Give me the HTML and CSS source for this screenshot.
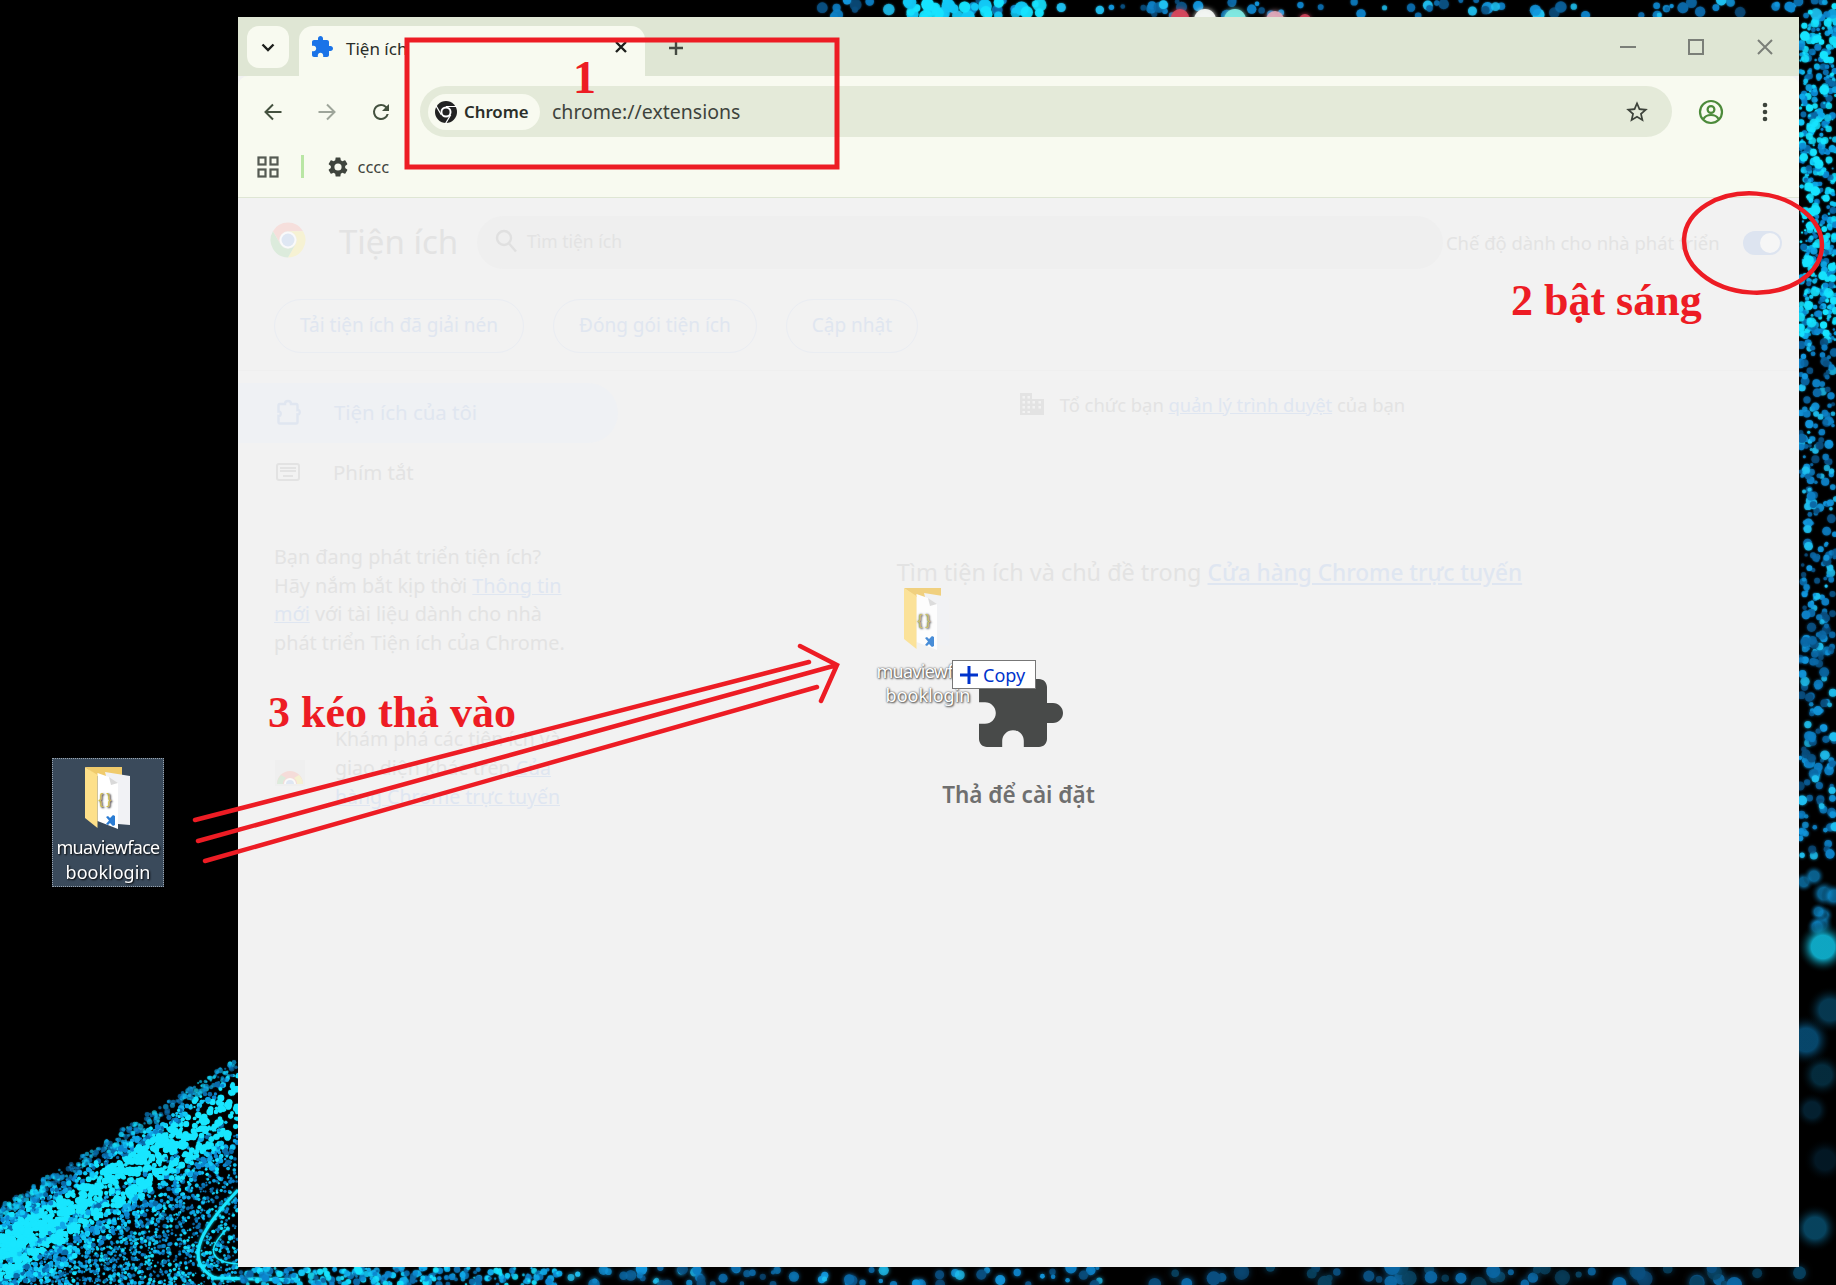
FILE: index.html
```html
<!DOCTYPE html>
<html lang="vi">
<head>
  <meta charset="UTF-8">
  <meta name="viewport" content="width=device-width, initial-scale=1.0">
  <title>Tiện ích</title>
  <link rel="stylesheet" href="styles.css">
</head>
<body>
  <svg class="defs" width="0" height="0">
    <defs>
      <symbol id="puzzle" viewBox="0 0 24 24">
        <path d="M20.5 11H19V7c0-1.1-.9-2-2-2h-4V3.5C13 2.12 11.88 1 10.5 1S8 2.12 8 3.5V5H4c-1.1 0-1.99.9-1.99 2v3.8H3.5c1.49 0 2.7 1.21 2.7 2.7s-1.21 2.7-2.7 2.7H2V20c0 1.1.9 2 2 2h3.8v-1.5c0-1.49 1.21-2.7 2.7-2.7 1.49 0 2.7 1.21 2.7 2.7V22H17c1.1 0 2-.9 2-2v-4h1.5c1.38 0 2.5-1.12 2.5-2.5S21.88 11 20.5 11z"/>
      </symbol>
      <symbol id="folder" viewBox="0 0 46 63">
        <path d="M0 0H37V11L12 9Z" fill="#f0cb6c"/>
        <path d="M20 5L45 9V58L33 57Z" fill="#f1f2f5"/>
        <path d="M12.5 6L24 10L33 16V62L12.5 54Z" fill="#fff"/>
        <path d="M24 10L33 16L26 18Z" fill="#d9d9d9"/>
        <path d="M0 0L12.5 8V61L0 51Z" fill="#fde08a"/>
        <text x="13.500" y="37" class="braces">{}</text>
        <path d="M21 50l2-1 2 2 3-3 2 1v9l-2 1-3-3-2 2-2-1 3-3.500z" fill="#2b7cd3"/>
      </symbol>
    </defs>
  </svg>

  <canvas id="wallpaper" class="wallpaper" width="1836" height="1285"></canvas>

  <div class="desktop-icon">
    <svg class="folder-icon"><use href="#folder"/></svg>
    <span class="name-top">muaviewface</span>
    <span>booklogin</span>
  </div>

  <div class="window">
    <div class="tabstrip">
      <button class="tab-search">
        <svg width="20" height="20" viewBox="0 0 20 20"><path d="M4.5 7.5L10 13l5.500-5.500" class="stroke-dark"/></svg>
      </button>
      <div class="tab">
        <svg class="tab-icon"><use href="#puzzle"/></svg>
        <span class="tab-title">Tiện ích</span>
        <svg class="tab-close" width="14" height="14" viewBox="0 0 14 14"><path d="M2 2l10 10M12 2L2 12" class="stroke-dark"/></svg>
      </div>
      <svg class="new-tab" width="16" height="16" viewBox="0 0 16 16"><path d="M8 1v14M1 8h14"/></svg>
      <div class="win-controls">
        <div class="win-btn"><svg width="16" height="16" viewBox="0 0 16 16"><path d="M0 8h16"/></svg></div>
        <div class="win-btn"><svg width="16" height="16" viewBox="0 0 16 16"><rect x="1" y="1" width="14" height="14"/></svg></div>
        <div class="win-btn wide"><svg width="16" height="16" viewBox="0 0 16 16"><path d="M1 1l14 14M15 1L1 15"/></svg></div>
      </div>
    </div>

    <div class="toolbar">
      <div class="nav-row">
        <button class="nav-btn"><svg width="24" height="24" viewBox="0 0 24 24"><path d="M20.500 12H4.500M12 4.500L4.500 12l7.500 7.500" class="stroke-nav"/></svg></button>
        <button class="nav-btn"><svg width="24" height="24" viewBox="0 0 24 24"><path d="M3.500 12H19.500M12 4.500l7.500 7.500-7.500 7.500" class="stroke-off"/></svg></button>
        <button class="nav-btn"><svg width="24" height="24" viewBox="0 0 24 24"><path class="fill-nav" d="M17.650 6.350A7.950 7.950 0 0 0 12 4a8 8 0 1 0 7.730 10h-2.080A6 6 0 1 1 12 6c1.660 0 3.140.69 4.220 1.780L13 11h7V4l-2.350 2.350z"/></svg></button>
        <div class="omnibox">
          <div class="chip">
            <svg class="chip-logo" width="24" height="24" viewBox="0 0 24 24">
              <circle cx="12" cy="12" r="11" fill="#222"/>
              <circle cx="12" cy="12" r="5.500" fill="#fff"/>
              <circle cx="12" cy="12" r="3.600" fill="#222"/>
              <path d="M12 6.500H23M7.240 14.750L1.800 5.400M16.760 14.750L11 24.500" stroke="#fff" stroke-width="1.200" fill="none"/>
            </svg>
            <span>Chrome</span>
          </div>
          <span class="url">chrome://extensions</span>
          <svg class="star" width="26" height="26" viewBox="0 0 24 24"><path d="M22 9.240l-7.190-.62L12 2 9.190 8.630 2 9.240l5.460 4.730L5.820 21 12 17.270 18.180 21l-1.630-7.030L22 9.240zM12 15.400l-3.760 2.270 1-4.280-3.320-2.880 4.380-.38L12 6.100l1.710 4.040 4.380.38-3.320 2.880 1 4.280L12 15.400z"/></svg>
        </div>
        <button class="nav-btn">
          <svg width="26" height="26" viewBox="0 0 26 26" class="profile">
            <circle cx="13" cy="13" r="11"/>
            <circle cx="13" cy="10.500" r="3.400"/>
            <path d="M5.500 20c1.500-3 4.500-4 7.500-4s6 1 7.500 4"/>
          </svg>
        </button>
        <button class="nav-btn">
          <svg width="6" height="20" viewBox="0 0 6 20"><circle cx="3" cy="3" r="2.300"/><circle cx="3" cy="10" r="2.300"/><circle cx="3" cy="17" r="2.300"/></svg>
        </button>
      </div>
      <div class="bookmarks">
        <svg class="apps" width="22" height="22" viewBox="0 0 22 22"><rect x="1.500" y="1.500" width="7" height="7"/><rect x="13.500" y="1.500" width="7" height="7"/><rect x="1.500" y="13.500" width="7" height="7"/><rect x="13.500" y="13.500" width="7" height="7"/></svg>
        <div class="bm-sep"></div>
        <svg class="gear" width="24" height="24" viewBox="0 0 24 24"><path d="M19.140 12.940c.04-.3.06-.61.06-.94 0-.32-.02-.64-.07-.94l2.030-1.580a.49.49 0 0 0 .12-.61l-1.920-3.320a.488.488 0 0 0-.59-.22l-2.390.96c-.5-.38-1.030-.7-1.620-.94l-.36-2.540a.484.484 0 0 0-.48-.41h-3.840c-.24 0-.43.17-.47.41l-.36 2.540c-.59.24-1.130.57-1.620.94l-2.390-.96c-.22-.08-.47 0-.59.22L2.740 8.870c-.12.21-.08.47.12.61l2.030 1.580c-.05.3-.09.63-.09.94s.02.64.07.94l-2.030 1.580a.49.49 0 0 0-.12.61l1.920 3.320c.12.22.37.29.59.22l2.390-.96c.5.38 1.030.7 1.620.94l.36 2.540c.05.24.24.41.48.41h3.840c.24 0 .44-.17.47-.41l.36-2.540c.59-.24 1.130-.56 1.620-.94l2.390.96c.22.08.47 0 .59-.22l1.920-3.320c.12-.22.07-.47-.12-.61l-2.010-1.580zM12 15.600A3.600 3.600 0 1 1 12 8.400a3.600 3.600 0 0 1 0 7.200z"/></svg>
        <span class="bm-label">cccc</span>
      </div>
    </div>

    <div class="content">
      <div class="page-head">
        <div class="head-row">
          <svg class="ext-logo" width="38" height="38" viewBox="0 0 24 24">
            <path fill="#f6dfdc" d="M21.530 6.500A11 11 0 0 0 2.470 6.500L7.240 14.750A5.500 5.500 0 0 1 12 6.500Z"/>
            <path fill="#f6f2d3" d="M21.530 6.500A11 11 0 0 1 12 23L16.760 14.750A5.500 5.500 0 0 0 12 6.500Z"/>
            <path fill="#dcebdc" d="M12 23A11 11 0 0 1 2.470 6.500L7.240 14.750A5.500 5.500 0 0 0 16.760 14.750Z"/>
            <circle cx="12" cy="12" r="5.200" fill="#fafafa"/>
            <circle cx="12" cy="12" r="4.100" fill="#dfe7f3"/>
          </svg>
          <h1 class="ext-title">Tiện ích</h1>
          <div class="search-box">
            <svg width="26" height="26" viewBox="0 0 26 26" class="search-icon"><circle cx="11" cy="10" r="7"/><path d="M16 15.500l7 8"/></svg>
            <span>Tìm tiện ích</span>
          </div>
          <span class="dev-label">Chế độ dành cho nhà phát triển</span>
          <div class="toggle"><div class="knob"></div></div>
        </div>
        <div class="action-row">
          <div class="pill-btn">Tải tiện ích đã giải nén</div>
          <div class="pill-btn">Đóng gói tiện ích</div>
          <div class="pill-btn">Cập nhật</div>
        </div>
      </div>

      <div class="page-main">
        <aside class="sidebar">
          <div class="side-item selected">
            <svg class="side-puzzle" width="26" height="28" viewBox="0 0 26 28"><path d="M5 6h5c0-4 6-4 6 0h5a1.500 1.500 0 0 1 1.500 1.500V12c3-.5 3 5 0 4.500v7.500a1.500 1.500 0 0 1-1.500 1.500H5A1.500 1.500 0 0 1 3.500 24v-6c3 .5 3-5 0-4.500V7.500A1.500 1.500 0 0 1 5 6z"/></svg>
            <span>Tiện ích của tôi</span>
          </div>
          <div class="side-item">
            <svg class="kbd" width="24" height="18" viewBox="0 0 24 18"><rect x="1" y="1" width="22" height="16" rx="2"/><path d="M4 5h16M4 8h16M7 13h10"/></svg>
            <span>Phím tắt</span>
          </div>
          <p class="side-note">Bạn đang phát triển tiện ích?<br>Hãy nắm bắt kịp thời <a>Thông tin</a><br><a>mới</a> với tài liệu dành cho nhà<br>phát triển Tiện ích của Chrome.</p>
          <div class="side-promo">
            <svg class="promo-icon" width="30" height="26" viewBox="0 0 30 26">
              <rect x="0" y="0" width="30" height="26" fill="#efefef"/>
              <path d="M2 24a13 13 0 0 1 26 0z" fill="#f5dcd9"/>
              <path d="M22 24a7 7 0 0 0-3-6l5-3a13 13 0 0 1 4 9z" fill="#f5f1d2"/>
              <path d="M8 24a7 7 0 0 1 3-6L6 15a13 13 0 0 0-4 9z" fill="#dcebdc"/>
              <path d="M9 24a6 6 0 0 1 12 0z" fill="#fafafa"/>
              <path d="M11 24a4 4 0 0 1 8 0z" fill="#dfe7f3"/>
            </svg>
            <p>Khám phá các tiện ích và<br>giao diện khác trên <a>Của</a><br><a>hàng Chrome trực tuyến</a></p>
          </div>
        </aside>
        <main class="main-col">
          <div class="org-note">
            <svg width="26" height="24" viewBox="0 0 26 24" class="building"><path d="M1 1h12v6h12v16H1zM3.500 4v2.500H6V4zm5 0v2.500H11V4zm-5 5v2.500H6V9zm5 0v2.500H11V9zm5 0v2.500H16V9zm6 0v2.500H22V9zM3.500 14v2.500H6V14zm5 0v2.500H11V14zm5 0v2.500H16V14zm6 0v2.500H22V14zM3.500 19v2H6v-2zm5 0v2H11v-2z" fill-rule="evenodd"/></svg>
            <span>Tổ chức bạn <a>quản lý trình duyệt</a> của bạn</span>
          </div>
          <div class="store-note">Tìm tiện ích và chủ đề trong <a>Cửa hàng Chrome trực tuyến</a></div>
        </main>
      </div>

      <div class="drop-zone">
        <svg class="drop-puzzle"><use href="#puzzle"/></svg>
        <div class="drop-label">Thả để cài đặt</div>
      </div>
    </div>
  </div>

  <div class="drag-ghost">
    <svg class="folder-icon"><use href="#folder"/></svg>
    <span class="name-top">muaviewface</span>
    <span>booklogin</span>
    <div class="copy-tip">
      <svg width="18" height="18" viewBox="0 0 18 18"><path d="M9 0v18M0 9h18"/></svg>
      <span>Copy</span>
    </div>
  </div>

  <svg class="marks" width="1836" height="1285" viewBox="0 0 1836 1285">
    <rect x="407" y="40" width="430" height="127"/>
    <ellipse cx="1753" cy="243" rx="69" ry="49.500" transform="rotate(4 1753 243)"/>
    <path d="M195 820L809 662M198 841L837 665M205 861L817 687M800 646L837 665L821 701"/>
  </svg>
  <div class="note note-1">1</div>
  <div class="note note-2">2 bật sáng</div>
  <div class="note note-3">3 kéo thả vào</div>

  <script src="particles.js"></script>
</body>
</html>
```
FILE: styles.css
```css
* {
  box-sizing: border-box;
}
html, body {
  margin: 0;
  height: 100%;
}
body {
  position: relative;
  width: 1836px;
  height: 1285px;
  overflow: hidden;
  background: #000;
  font-family: "Noto Sans", sans-serif;
  color: #e3e3e3;
}
button {
  border: none;
  background: none;
  padding: 0;
  display: flex;
  align-items: center;
  justify-content: center;
}
a {
  color: #dfe6f1;
  text-decoration: underline;
}
.defs {
  position: absolute;
}
.wallpaper {
  position: absolute;
  top: 0;
  left: 0;
}
.braces {
  font-family: "Liberation Sans", sans-serif;
  font-size: 15px;
  letter-spacing: 3px;
  fill: #c9bb55;
}
.folder-icon {
  width: 46px;
  height: 63px;
}
.name-top {
  letter-spacing: -0.700px;
  white-space: nowrap;
}

/* Desktop icon */
.desktop-icon {
  position: absolute;
  left: 52px;
  top: 758px;
  width: 112px;
  height: 129px;
  padding-top: 8px;
  display: flex;
  flex-direction: column;
  align-items: center;
  background: #3a4a5b;
  border: 1px dotted #98a3ae;
  color: #fff;
  font-size: 18px;
  line-height: 25px;
  text-shadow: 1px 1px 2px #000;
}
.desktop-icon .folder-icon {
  margin-bottom: 5px;
}

/* Browser window */
.window {
  position: absolute;
  left: 238px;
  top: 17px;
  width: 1561px;
  height: 1250px;
  display: flex;
  flex-direction: column;
  background: #f2f2f2;
}
.tabstrip {
  height: 59px;
  flex: none;
  display: flex;
  padding: 9px 0 0 9px;
  background: #dfe6d4;
}
.tab-search {
  width: 42px;
  height: 42px;
  border-radius: 12px;
  background: #f8faf0;
}
.stroke-dark {
  fill: none;
  stroke: #1d1f1c;
  stroke-width: 2.4;
}
.tab {
  position: relative;
  width: 346px;
  height: 50px;
  margin-left: 10px;
  padding: 0 17px 0 11px;
  display: flex;
  align-items: center;
  background: #f8faf0;
  border-radius: 14px 14px 0 0;
  color: #2a2d28;
  font-size: 17px;
}
.tab-icon {
  width: 24px;
  height: 24px;
  fill: #1a73e8;
  margin-bottom: 8px;
}
.tab-title {
  margin: 0 0 6px 12px;
}
.tab-close {
  margin: 0 0 8px auto;
}
.new-tab {
  margin: 14px 0 0 23px;
  fill: none;
  stroke: #444a42;
  stroke-width: 2.400;
}
.win-controls {
  margin-left: auto;
  margin-top: -9px;
  margin-right: -1px;
  display: flex;
}
.win-btn {
  width: 68px;
  height: 59px;
  display: flex;
  align-items: center;
  justify-content: center;
  fill: none;
  stroke: #7b7f78;
  stroke-width: 2;
}
.win-btn.wide {
  width: 70px;
}

/* Toolbar */
.toolbar {
  flex: none;
  height: 122px;
  background: #f8faf0;
  border-radius: 10px 10px 0 0;
  border-bottom: 1px solid #dfe6d4;
  padding-top: 10px;
}
.nav-row {
  display: flex;
  align-items: center;
  height: 51px;
  padding: 0 7px 0 8px;
}
.nav-btn {
  width: 54px;
  height: 51px;
  flex: none;
  fill: #3d433b;
}
.stroke-nav {
  fill: none;
  stroke: #44513f;
  stroke-width: 2;
}
.stroke-off {
  fill: none;
  stroke: #9ea59a;
  stroke-width: 2;
}
.fill-nav {
  fill: #44513f;
}
.profile {
  fill: none;
  stroke: #4c8a3a;
  stroke-width: 2.200;
}
.omnibox {
  flex: 1;
  height: 51px;
  margin: 0 12px;
  padding: 0 22px 0 8px;
  display: flex;
  align-items: center;
  background: #e4ead9;
  border-radius: 26px;
}
.chip {
  width: 112px;
  height: 36px;
  padding-left: 6px;
  display: flex;
  align-items: center;
  gap: 6px;
  background: #f8faf0;
  border-radius: 18px;
  color: #2b2e29;
  font-size: 16.800px;
  font-weight: 600;
}
.chip-logo {
  flex: none;
}
.url {
  margin-left: 12px;
  font-size: 19.500px;
  color: #3e433c;
}
.star {
  margin-left: auto;
  fill: #3d433b;
}
.bookmarks {
  height: 59px;
  padding-left: 19px;
  display: flex;
  align-items: center;
  color: #3f443d;
  font-size: 16.500px;
}
.apps {
  fill: none;
  stroke: #555a53;
  stroke-width: 2.200;
}
.bm-sep {
  width: 2.500px;
  height: 23px;
  margin: 0 22px;
  background: #b9e6a4;
}
.gear {
  fill: #3f443d;
}
.bm-label {
  margin-left: 8px;
}

/* Extensions page, behind the drop overlay */
.content {
  position: relative;
  flex: 1;
  display: flex;
  flex-direction: column;
  font-size: 18.400px;
}
.page-head {
  padding: 18px 17px 17px 0;
  border-bottom: 1px solid #efefef;
}
.head-row {
  display: flex;
  align-items: center;
  height: 53px;
  padding-left: 31px;
}
.ext-logo {
  flex: none;
  margin-bottom: 6px;
}
.ext-title {
  width: 138px;
  margin: -2px 0 0 32px;
  font-size: 33px;
  font-weight: 400;
  white-space: nowrap;
}
.search-box {
  width: 966px;
  height: 53px;
  padding: 0 0 4px 16px;
  display: flex;
  align-items: center;
  gap: 8px;
  flex: none;
  background: #efefef;
  border-radius: 27px;
  font-size: 17.500px;
}
.search-icon {
  fill: none;
  stroke: #e0e0e0;
  stroke-width: 2.400;
}
.dev-label {
  margin: 0 0 1px 3px;
  white-space: nowrap;
}
.toggle {
  margin-left: auto;
  width: 39px;
  height: 24px;
  padding: 2px 2px 2px 17px;
  background: #dde4f0;
  border-radius: 12px;
}
.knob {
  width: 20px;
  height: 20px;
  border-radius: 50%;
  background: #f6f6f6;
}
.action-row {
  display: flex;
  gap: 29px;
  margin-top: 30px;
  padding-left: 36px;
  font-size: 19px;
}
.pill-btn {
  height: 54px;
  padding: 0 25px 2px;
  display: flex;
  align-items: center;
  border: 1px solid #eaedf2;
  border-radius: 27px;
  color: #e0e6f0;
}
.page-main {
  flex: 1;
  display: flex;
}
.sidebar {
  width: 380px;
  flex: none;
  padding-top: 12px;
  font-size: 20.400px;
}
.side-item {
  height: 60px;
  padding: 0 0 2px 38px;
  display: flex;
  align-items: center;
  gap: 33px;
  border-radius: 0 30px 30px 0;
}
.side-item.selected {
  background: #eff1f4;
  color: #e0e6f0;
}
.side-puzzle {
  margin-left: -1px;
  fill: none;
  stroke: #e0e6f0;
  stroke-width: 2.400;
}
.kbd {
  fill: none;
  stroke: #e3e3e3;
  stroke-width: 2;
}
.side-note {
  margin: 40px 0 0 36px;
  font-size: 19.800px;
  line-height: 28.500px;
  white-space: nowrap;
}
.side-promo {
  display: flex;
  align-items: center;
  margin: 67px 0 0 37px;
  gap: 30px;
  font-size: 19.500px;
}
.side-promo p {
  margin: 0;
  line-height: 29px;
  white-space: nowrap;
}
.promo-icon {
  flex: none;
  margin-top: 10px;
}
.main-col {
  flex: 1;
  display: flex;
  flex-direction: column;
  align-items: center;
  padding-top: 20px;
}
.org-note {
  display: flex;
  align-items: center;
  gap: 15px;
  height: 26px;
  margin-left: 7px;
}
.building {
  fill: #e3e3e3;
}
.store-note {
  margin-top: 139px;
  margin-left: 2px;
  font-size: 23.400px;
  white-space: nowrap;
}
.store-note a {
  font-size: 22.600px;
  font-weight: 500;
}
.drop-zone {
  position: absolute;
  inset: 0;
  padding-top: 461px;
  display: flex;
  flex-direction: column;
  align-items: center;
}
.drop-puzzle {
  width: 96px;
  height: 96px;
  fill: #484a49;
}
.drop-label {
  margin-top: 24px;
  color: #6f6f6f;
  font-size: 22.500px;
  font-weight: 600;
  line-height: 32px;
}

/* Folder being dragged */
.drag-ghost {
  position: absolute;
  left: 868px;
  top: 588px;
  width: 120px;
  display: flex;
  flex-direction: column;
  align-items: center;
  color: #fff;
  font-size: 18px;
  line-height: 24px;
  text-shadow: 0 0 2px #333, 1px 1px 2px #555;
}
.drag-ghost .folder-icon {
  margin-left: -3px;
  margin-bottom: 8px;
  opacity: 0.85;
}
.copy-tip {
  position: absolute;
  left: 84px;
  top: 72px;
  width: 84px;
  height: 29px;
  padding-left: 7px;
  display: flex;
  align-items: center;
  gap: 5px;
  background: #fff;
  border: 1px solid #777;
  color: #0033cc;
  font-size: 18px;
  text-shadow: none;
}
.copy-tip svg {
  stroke: #0033cc;
  stroke-width: 3;
}

/* Red notes drawn on top of the screenshot */
.marks {
  position: absolute;
  top: 0;
  left: 0;
  fill: none;
  stroke: #ed1c24;
  stroke-width: 4.500;
  stroke-linecap: round;
}
.marks rect {
  stroke-width: 5;
  stroke-linecap: butt;
}
.note {
  position: absolute;
  font-family: "Liberation Serif", serif;
  font-weight: 700;
  color: #ed1c24;
  line-height: 1;
  white-space: nowrap;
}
.note-1 {
  left: 573px;
  top: 55px;
  font-size: 46px;
}
.note-2 {
  left: 1511px;
  top: 279px;
  font-size: 44px;
}
.note-3 {
  left: 268px;
  top: 691px;
  font-size: 44px;
}
```
FILE: particles.js
```js
// Draws the wallpaper that shows around the browser window.
var canvas = document.getElementById("wallpaper");
var ctx = canvas.getContext("2d");

var seed = 4711;
function rnd() {
  seed = (seed * 16807) % 2147483647;
  return seed / 2147483647;
}
function between(a, b) {
  return a + (b - a) * rnd();
}

var CYAN = ["#16e4ff", "#12c8f5", "#0fa8e8", "#0c86cf", "#0a6aa8"];
var BLUE = ["#1fc0f0", "#1296dc", "#0d7fc4", "#0b68a6", "#0a4f80"];

function dot(x, y, r, color, alpha, blur) {
  ctx.globalAlpha = alpha;
  ctx.fillStyle = color;
  ctx.shadowColor = color;
  ctx.shadowBlur = blur;
  ctx.beginPath();
  ctx.arc(x, y, r, 0, Math.PI * 2);
  ctx.fill();
}

// soft spot without a hard edge
function blob(x, y, r, color, alpha) {
  var g = ctx.createRadialGradient(x, y, 0, x, y, r);
  g.addColorStop(0, color);
  g.addColorStop(0.45, color);
  g.addColorStop(1, "rgba(0, 0, 0, 0)");
  ctx.globalAlpha = alpha;
  ctx.shadowBlur = 0;
  ctx.fillStyle = g;
  ctx.beginPath();
  ctx.arc(x, y, r, 0, Math.PI * 2);
  ctx.fill();
}

function scatter(n, x0, x1, y0, y1, colors, r0, r1, blur) {
  for (var i = 0; i < n; i++) {
    var c = colors[Math.floor(rnd() * colors.length)];
    dot(between(x0, x1), between(y0, y1), between(r0, r1), c, between(0.65, 1), blur);
  }
}

// right hand strip, dense at the top and blurred towards the bottom
scatter(430, 1800, 1836, 17, 340, CYAN, 1, 3.6, 2);
scatter(60, 1800, 1836, 17, 340, ["#16e4ff"], 2.5, 5, 2);
scatter(190, 1800, 1836, 340, 620, BLUE, 1.5, 4.5, 2);
scatter(120, 1800, 1836, 620, 860, BLUE, 2, 5, 3);
for (var b = 0; b < 8; b++) {
  blob(between(1802, 1836), between(860, 930), between(8, 14), "#0e88c8", 0.7);
}
blob(1823, 947, 26, "#10b8d8", 0.9);
blob(1806, 1040, 26, "#0b74b0", 0.6);
blob(1830, 1010, 24, "#0c6f9f", 0.5);
blob(1822, 1075, 22, "#0a5f85", 0.45);
blob(1812, 1110, 18, "#08405f", 0.5);
blob(1825, 1160, 22, "#062f48", 0.5);
blob(1815, 1228, 24, "#0a5f85", 0.7);

// strip above the window
scatter(90, 820, 1836, 0, 17, BLUE, 2, 6, 2);
scatter(34, 900, 1040, 0, 17, ["#16e4ff", "#12c8f5"], 3, 7, 2);
dot(1180, 18, 9, "#d8485c", 0.9, 5);
dot(1205, 20, 11, "#f2f6f2", 0.95, 5);
dot(1235, 20, 11, "#7fe8e0", 0.95, 5);
dot(1275, 20, 9, "#e0a8b8", 0.9, 5);
dot(1305, 20, 6, "#d84860", 0.8, 4);
scatter(10, 1780, 1836, 0, 17, CYAN, 2, 5, 2);

// diagonal band in the bottom left corner
for (var i = 0; i < 3400; i++) {
  var px = between(0, 238);
  var bandTop = 1207 - 150 * px / 238;
  var depth = rnd() * (1290 - bandTop);
  var ridge = Math.abs(depth - 42) < 14 || Math.abs(depth - 68) < 6;
  var far = depth > 100;
  var color = ridge ? "#18e6ff" : CYAN[Math.floor(rnd() * CYAN.length)];
  var alpha = depth < 14 ? 0.45 : far ? 0.8 : 1;
  dot(px, bandTop + depth, ridge ? between(1.5, 3.4) : far ? between(0.7, 2) : between(1, 2.8), color, alpha, 1);
}

// bright curved lines at the foot of the band
ctx.globalAlpha = 1;
ctx.shadowBlur = 3;
ctx.shadowColor = "#18e6ff";
ctx.strokeStyle = "#18e6ff";
ctx.lineWidth = 3;
ctx.beginPath();
ctx.moveTo(238, 1190);
ctx.bezierCurveTo(205, 1225, 180, 1260, 215, 1278);
ctx.lineTo(300, 1280);
ctx.stroke();
ctx.lineWidth = 1.5;
ctx.beginPath();
ctx.moveTo(228, 1228);
ctx.bezierCurveTo(205, 1250, 210, 1262, 238, 1264);
ctx.stroke();

// strip below the window
scatter(260, 238, 560, 1267, 1285, CYAN, 1, 3.5, 2);
scatter(70, 560, 1100, 1267, 1285, BLUE, 2, 6, 4);
scatter(50, 1100, 1800, 1267, 1285, ["#0b68a6", "#0a4f80", "#08415f"], 3, 8, 6);
```
